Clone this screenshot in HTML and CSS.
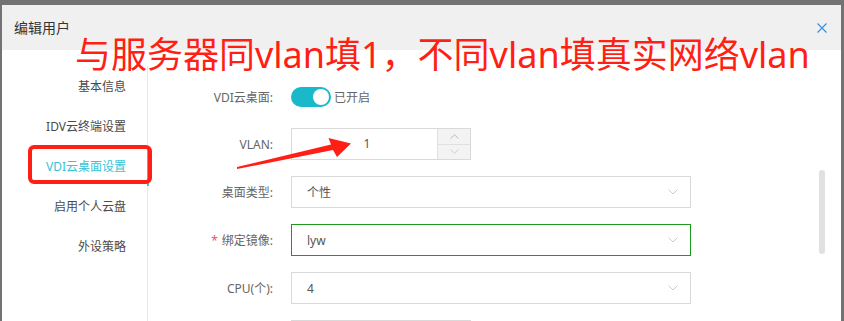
FILE: index.html
```html
<!DOCTYPE html>
<html lang="zh-CN">
<head>
<meta charset="utf-8">
<title>编辑用户</title>
<link rel="stylesheet" href="styles.css">
</head>
<body>
<div class="dialog">
  <div class="dlg-head">
    <span class="dlg-title">编辑用户</span>
    <span class="close">
      <svg width="10" height="10" viewBox="0 0 10 10"><path d="M0.5 0.5L9.5 9.5M9.5 0.5L0.5 9.5" stroke="#3a8fe0" stroke-width="1.2" fill="none"/></svg>
    </span>
  </div>
  <div class="dlg-body">
    <nav class="side">
      <div class="nav-item"><span>基本信息</span></div>
      <div class="nav-item"><span>IDV云终端设置</span></div>
      <div class="nav-item active"><span>VDI云桌面设置</span></div>
      <div class="nav-item"><span>启用个人云盘</span></div>
      <div class="nav-item"><span>外设策略</span></div>
    </nav>
    <div class="form">
      <div class="row row-first">
        <span class="lbl">VDI云桌面:</span>
        <span class="switch"><span class="knob"></span></span>
        <span class="switch-text">已开启</span>
      </div>
      <div class="row">
        <span class="lbl">VLAN:</span>
        <div class="num">
          <span class="num-val">1</span>
          <div class="spin">
            <span class="spin-btn"><svg width="9" height="5" viewBox="0 0 9 5"><path d="M0.5 4.5L4.5 0.8L8.5 4.5" stroke="#bdbdbd" fill="none"/></svg></span>
            <span class="spin-btn spin-down"><svg width="9" height="5" viewBox="0 0 9 5"><path d="M0.5 0.5L4.5 4.2L8.5 0.5" stroke="#cfcfcf" fill="none"/></svg></span>
          </div>
        </div>
      </div>
      <div class="row">
        <span class="lbl">桌面类型:</span>
        <div class="select"><span class="sel-val">个性</span><svg class="chev" width="10" height="6" viewBox="0 0 10 6"><path d="M0.5 0.5L5 5L9.5 0.5" stroke="#cccccc" fill="none"/></svg></div>
      </div>
      <div class="row">
        <span class="lbl"><span class="req">*</span>绑定镜像:</span>
        <div class="select select-ok"><span class="sel-val">lyw</span><svg class="chev" width="10" height="6" viewBox="0 0 10 6"><path d="M0.5 0.5L5 5L9.5 0.5" stroke="#cccccc" fill="none"/></svg></div>
      </div>
      <div class="row">
        <span class="lbl">CPU(个):</span>
        <div class="select"><span class="sel-val">4</span><svg class="chev" width="10" height="6" viewBox="0 0 10 6"><path d="M0.5 0.5L5 5L9.5 0.5" stroke="#cccccc" fill="none"/></svg></div>
      </div>
      <div class="row row-last">
        <span class="lbl"></span>
        <div class="num"></div>
      </div>
    </div>
    <div class="scrollbar"></div>
  </div>
</div>
<div class="annot">与服务器同vlan填1，不同vlan填真实网络vlan</div>
<div class="annot-box"></div>
<svg class="annot-arrow" width="844" height="321" viewBox="0 0 844 321">
  <polygon points="237,167 331,144.5 328.5,138 351,143.5 337,157 333,150 237,169" fill="#ff1f14"/>
</svg>
</body>
</html>
```

FILE: styles.css
```css
html, body {
  margin: 0;
  padding: 0;
}
body {
  position: relative;
  width: 844px;
  height: 321px;
  overflow: hidden;
  background: #737373;
  font-family: "Noto Sans", "Noto Sans CJK SC", sans-serif;
  font-size: 12px;
  color: #666;
  padding-top: 5px;
  box-sizing: border-box;
}
.dialog {
  margin-left: 2px;
  width: 839px;
  height: 330px;
  background: #fff;
  position: relative;
}
.dlg-head {
  height: 45px;
  background: #f0f0f0;
  display: flex;
  align-items: center;
  justify-content: space-between;
  padding: 0 14px 0 12px;
}
.dlg-title {
  font-size: 14px;
  color: #333;
  padding-bottom: 1px;
}
.close {
  display: flex;
  margin-top: 1px;
}
.dlg-body {
  display: flex;
  position: relative;
  height: 285px;
  align-items: flex-start;
}
.side {
  width: 145px;
  margin-top: 16px;
  border-right: 1px solid #e8e8e8;
  display: flex;
  flex-direction: column;
  flex-shrink: 0;
  height: 269px;
}
.nav-item {
  height: 40px;
  display: flex;
  align-items: center;
  justify-content: flex-end;
  padding-right: 21px;
  color: #4a4a4a;
  position: relative;
  flex-shrink: 0;
  line-height: 17px;
}
.nav-item.active {
  color: #38c3d7;
}
.nav-item.active::after {
  content: "";
  position: absolute;
  right: -2px;
  top: 0;
  width: 2px;
  height: 40px;
  background: #38c3d7;
}
.form {
  padding-top: 30px;
  display: flex;
  flex-direction: column;
}
.row {
  display: flex;
  align-items: center;
  height: 32px;
  margin-bottom: 16px;
  flex-shrink: 0;
}
.row-first {
  height: 34px;
  margin-bottom: 14px;
}
.lbl {
  width: 125px;
  margin-right: 18px;
  text-align: right;
  color: #666;
}
.req {
  color: #f0506e;
  margin-right: 4px;
}
.switch {
  width: 40px;
  height: 20px;
  border-radius: 10px;
  background: #1ab9c9;
  display: flex;
  align-items: center;
  justify-content: flex-end;
  padding-right: 2px;
  box-sizing: border-box;
}
.knob {
  width: 16px;
  height: 16px;
  border-radius: 50%;
  background: #fff;
}
.switch-text {
  margin-left: 3px;
  color: #666;
}
.num {
  width: 180px;
  height: 32px;
  box-sizing: border-box;
  border: 1px solid #d9d9d9;
  display: flex;
}
.num-val {
  flex: 1;
  text-align: center;
  line-height: 30px;
  color: #555;
  padding-left: 5px;
}
.spin {
  width: 32px;
  border-left: 1px solid #e0e0e0;
  background: #f3f3f3;
  display: flex;
  flex-direction: column;
}
.spin-btn {
  flex: 1;
  display: flex;
  align-items: center;
  justify-content: center;
}
.spin-down {
  border-top: 1px solid #e0e0e0;
}
.select {
  width: 400px;
  height: 32px;
  box-sizing: border-box;
  border: 1px solid #d9d9d9;
  display: flex;
  align-items: center;
  justify-content: space-between;
  padding: 0 12px 0 15px;
}
.select-ok {
  border-color: #1f9a1f;
}
.sel-val {
  color: #555;
}
.chev {
  display: block;
}
.scrollbar {
  position: absolute;
  right: 16px;
  top: 120px;
  width: 6px;
  height: 84px;
  border-radius: 3px;
  background: #e1e1e1;
}
.annot {
  position: absolute;
  left: 75px;
  top: 37px;
  font-size: 36px;
  line-height: 36px;
  color: #ff1f14;
  white-space: nowrap;
  font-family: "Noto Sans", "Noto Sans CJK SC", sans-serif;
}
.annot-box {
  position: absolute;
  left: 28px;
  top: 145px;
  width: 124px;
  height: 39px;
  box-sizing: border-box;
  border: 4px solid #ff1f14;
  border-radius: 6px;
}
.annot-arrow {
  position: absolute;
  left: 0;
  top: 0;
  pointer-events: none;
}
```
